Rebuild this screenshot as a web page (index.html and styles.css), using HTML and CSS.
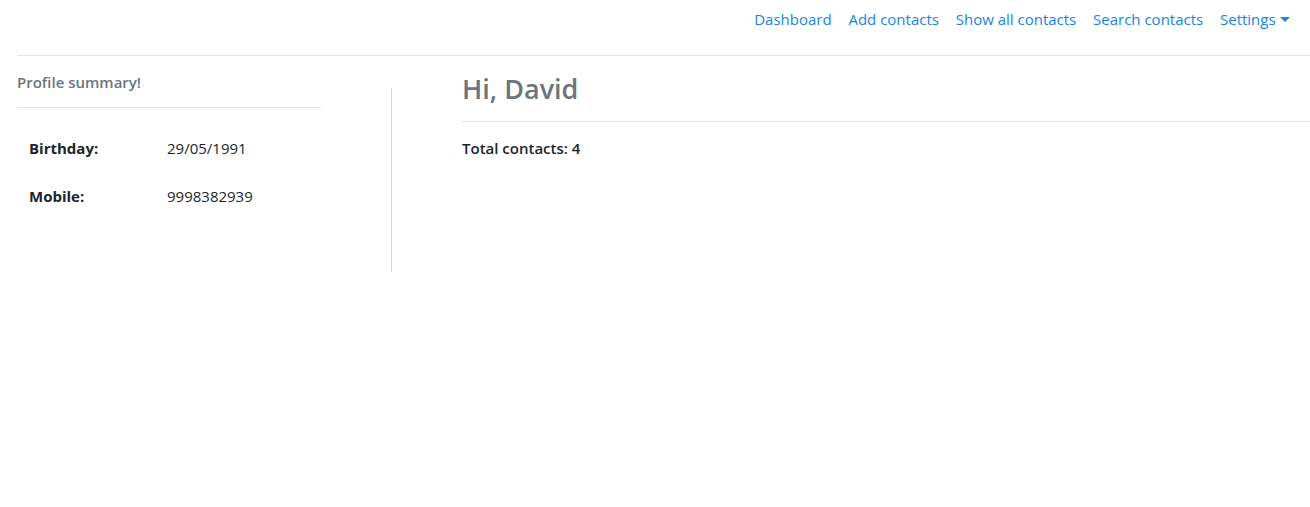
FILE: index.html
```html
<!DOCTYPE html>
<html lang="en">
<head>
<meta charset="utf-8">
<title>Dashboard</title>
<link rel="stylesheet" href="styles.css">
</head>
<body>
<nav class="topnav">
  <a class="nav-link" href="#">Dashboard</a>
  <a class="nav-link" href="#">Add contacts</a>
  <a class="nav-link" href="#">Show all contacts</a>
  <a class="nav-link" href="#">Search contacts</a>
  <a class="nav-link dropdown" href="#">Settings<span class="caret"></span></a>
</nav>
<main class="layout">
  <aside class="profile">
    <h6 class="profile-title">Profile summary!</h6>
    <table class="profile-table">
      <tr><th>Birthday:</th><td>29/05/1991</td></tr>
      <tr><th>Mobile:</th><td>9998382939</td></tr>
    </table>
  </aside>
  <div class="divider"></div>
  <section class="content">
    <h3 class="greeting">Hi, David</h3>
    <p class="total">Total contacts: 4</p>
  </section>
</main>
</body>
</html>
```
FILE: styles.css
```css
* { box-sizing: border-box; }
html, body { margin: 0; padding: 0; background: #fff; }
body {
  font-family: "Open Sans", "Noto Sans", sans-serif;
  font-size: 15px;
  color: #212529;
  width: 1310px;
  height: 507px;
  overflow: hidden;
}
.topnav {
  display: flex;
  justify-content: flex-end;
  align-items: center;
  height: 56px;
  margin-left: 17px;
  padding: 0 12px 18px 0;
  border-bottom: 1px solid #e3e3e3;
}
.nav-link {
  color: #1a84e6;
  text-decoration: none;
  padding: 0 8.4px;
  font-size: 15px;
  line-height: 22px;
}
.caret {
  display: inline-block;
  width: 0;
  height: 0;
  margin-left: 4px;
  vertical-align: 3px;
  border-left: 5px solid transparent;
  border-right: 5px solid transparent;
  border-top: 5px solid #1a84e6;
}
.layout {
  display: flex;
  align-items: flex-start;
  padding-left: 17px;
}
.profile { width: 304px; padding-top: 16px; }
.profile-title {
  margin: 0;
  font-size: 15px;
  font-weight: 600;
  color: #6c757d;
  line-height: 20px;
  padding-bottom: 15px;
  border-bottom: 1px solid #e3e3e3;
}
.profile-table { border-collapse: collapse; margin-top: 16px; }
.profile-table th, .profile-table td {
  padding: 12px;
  line-height: 24px;
  font-size: 15px;
  text-align: left;
  vertical-align: top;
}
.profile-table th { width: 138px; font-weight: 700; }
.profile-table td { font-weight: 400; }
.divider {
  width: 1px;
  height: 184px;
  background: #dcdcdc;
  margin: 32px 0 0 70px;
}
.content { flex: 1; margin-left: 70px; padding-top: 15px; }
.greeting {
  margin: 0;
  font-size: 27px;
  font-weight: 600;
  color: #6c757d;
  line-height: 36px;
  padding-bottom: 14px;
  border-bottom: 1px solid #e3e3e3;
}
.total { margin: 15px 0 0; font-size: 15px; font-weight: 600; line-height: 22px; }
```
